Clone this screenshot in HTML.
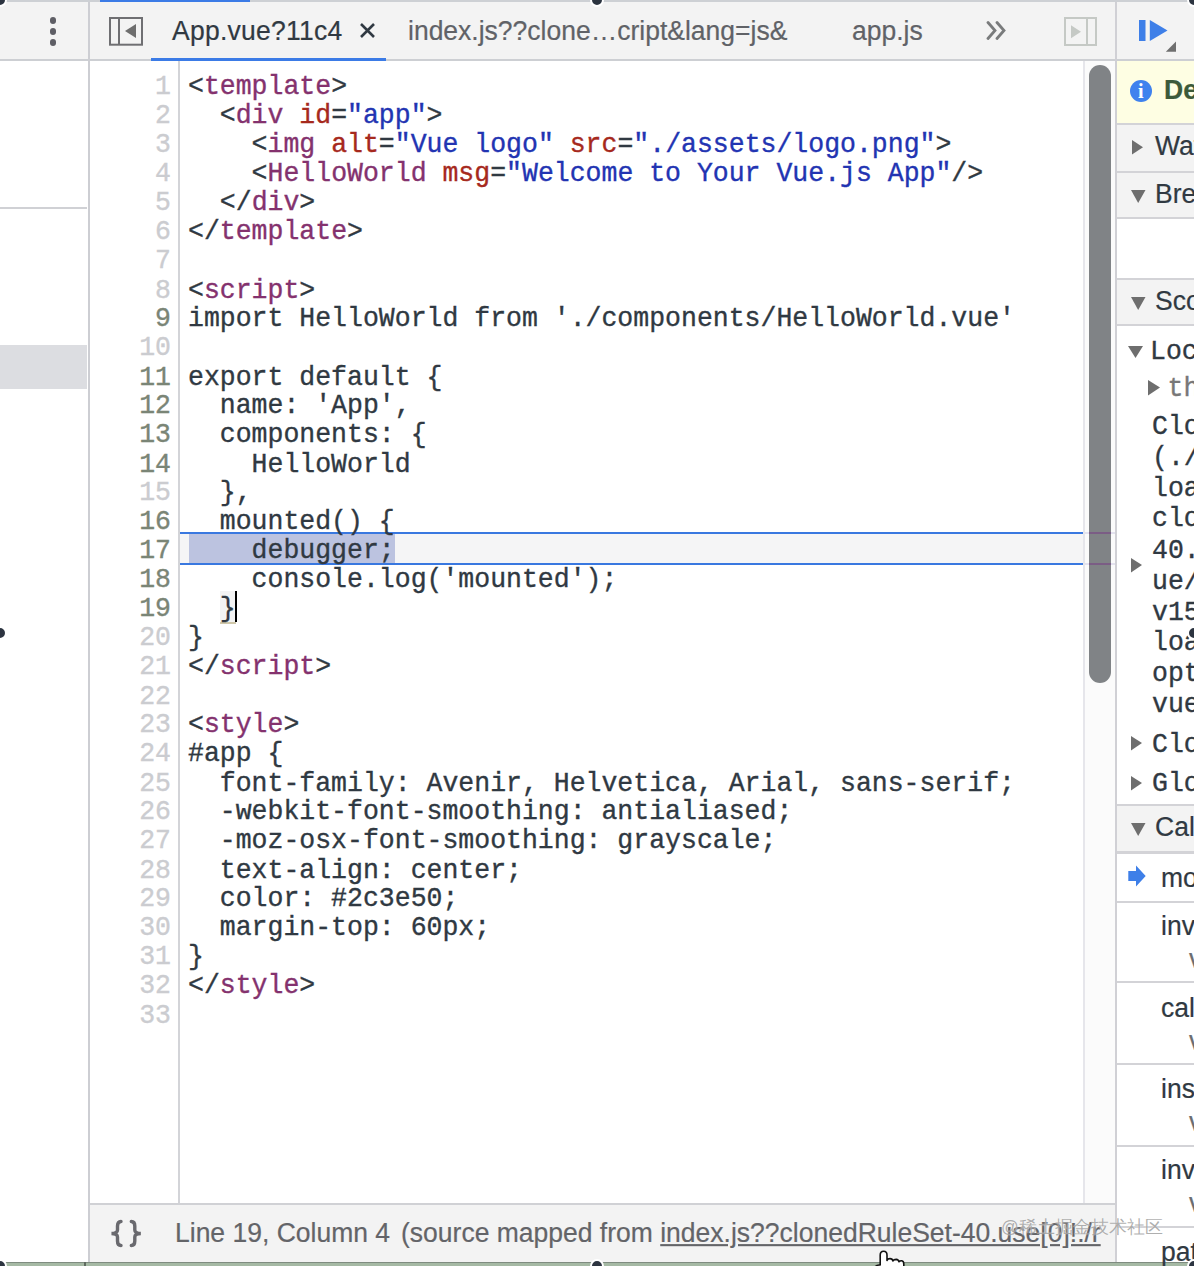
<!DOCTYPE html>
<html><head><meta charset="utf-8">
<style>
*{margin:0;padding:0;box-sizing:border-box}
html,body{width:1194px;height:1266px;overflow:hidden;background:#fff;position:relative;font-family:"Liberation Sans",sans-serif}
.a{position:absolute}
.sans{font-family:"Liberation Sans",sans-serif;-webkit-text-stroke:0.2px currentColor;transform:scaleY(1.05);transform-origin:0 26px}
.mono{font-family:"Liberation Mono",monospace;-webkit-text-stroke:0.35px currentColor;transform:scaleY(1.06);transform-origin:0 21.5px}
/* code */
#code{position:absolute;left:188px;top:72.5px;transform:scaleY(1.06);transform-origin:0 0;-webkit-text-stroke:0.35px currentColor;font-family:"Liberation Mono",monospace;font-size:26.5px;line-height:27.358px;color:#303942;white-space:pre}
#gut{position:absolute;left:90px;width:81px;top:72.5px;transform:scaleY(1.06);transform-origin:0 0;-webkit-text-stroke:0.35px currentColor;font-family:"Liberation Mono",monospace;font-size:26.5px;line-height:27.358px;color:#cbccd0;text-align:right;white-space:pre}
#gut .d{color:#7a8576}
.t{color:#84326e}
.n{color:#a6291d}
.v{color:#2234b2}
</style></head>
<body>
<!-- top strip -->
<div class="a" style="left:0;top:0;width:1194px;height:2px;background:#cdd0d4"></div>
<div class="a" style="left:100px;top:0;width:150px;height:1.5px;background:#3b7be6"></div>

<!-- left panel -->
<div class="a" style="left:0;top:2px;width:88px;height:57px;background:#f3f3f3"></div>
<div class="a" style="left:0;top:59px;width:88px;height:2px;background:#cdcfd3"></div>
<div class="a" style="left:49.8px;top:17.1px;width:6.5px;height:6.5px;border-radius:50%;background:#5e5e65"></div>
<div class="a" style="left:49.8px;top:28.1px;width:6.5px;height:6.5px;border-radius:50%;background:#5e5e65"></div>
<div class="a" style="left:49.8px;top:39.2px;width:6.5px;height:6.5px;border-radius:50%;background:#5e5e65"></div>
<div class="a" style="left:0;top:207px;width:87px;height:2px;background:#d0d1d5"></div>
<div class="a" style="left:0;top:345px;width:87px;height:44px;background:#dcdde1"></div>
<div class="a" style="left:88px;top:2px;width:2px;height:1260px;background:#cdced3"></div>

<!-- tab bar -->
<div class="a" style="left:90px;top:2px;width:1025px;height:57px;background:#f3f3f3"></div>
<div class="a" style="left:90px;top:59px;width:1025px;height:2px;background:#cdcfd3"></div>
<div class="a" style="left:151px;top:58px;width:235px;height:3px;background:#3b7be6"></div>
<!-- sidebar toggle left -->
<svg class="a" style="left:108px;top:16px" width="36" height="31" viewBox="0 0 36 31">
 <rect x="2" y="2" width="32" height="26.7" fill="none" stroke="#6f6f72" stroke-width="2"/>
 <line x1="11" y1="2" x2="11" y2="28.7" stroke="#6f6f72" stroke-width="2"/>
 <path d="M17 15 L28 8 L28 22 Z" fill="#6e6e6e"/>
</svg>
<div class="a sans" style="left:172px;top:13.6px;font-size:26.5px;line-height:34px;color:#303942;white-space:pre;letter-spacing:0.25px">App.vue?11c4</div>
<svg class="a" style="left:358px;top:22px" width="19" height="17" viewBox="0 0 19 17">
 <path d="M3 2 L16 15 M16 2 L3 15" stroke="#303942" stroke-width="2.6"/>
</svg>
<div class="a sans" style="left:408px;top:13.6px;font-size:26.5px;line-height:34px;color:#606267;white-space:pre">index.js??clone…cript&amp;lang=js&amp;</div>
<div class="a sans" style="left:852px;top:13.6px;font-size:26.5px;line-height:34px;color:#606267;white-space:pre">app.js</div>
<svg class="a" style="left:985px;top:20px" width="24" height="20" viewBox="0 0 24 20">
 <path d="M3 2.5 L10 10.5 L3 18.5 M12 2.5 L19 10.5 L12 18.5" fill="none" stroke="#797b7c" stroke-width="2.8" stroke-linecap="round"/>
</svg>
<svg class="a" style="left:1063px;top:16px" width="37" height="32" viewBox="0 0 37 32">
 <rect x="2" y="2" width="31" height="27" fill="none" stroke="#c5c9c5" stroke-width="2"/>
 <line x1="24" y1="2" x2="24" y2="29" stroke="#c5c9c5" stroke-width="2"/>
 <path d="M8 9.2 L18 15.75 L8 22.3 Z" fill="#c5c9c5"/>
</svg>

<!-- editor -->
<div class="a" style="left:178px;top:61px;width:2px;height:1142px;background:#d3d4d8"></div>
<!-- line 17 highlight -->
<div class="a" style="left:180px;top:534px;width:903px;height:29px;background:#f5f5f6"></div>
<div class="a" style="left:189px;top:534px;width:206px;height:29px;background:#bcc3e0"></div>
<div class="a" style="left:180px;top:532px;width:903px;height:2px;background:#3978e0"></div>
<div class="a" style="left:180px;top:563px;width:903px;height:2px;background:#3978e0"></div>
<!-- line 19 bracket -->
<div class="a" style="left:220px;top:591px;width:15px;height:31px;background:#f3f3f3"></div>
<div class="a" style="left:220px;top:622px;width:16px;height:2px;background:#d0c8aa"></div>
<div class="a" style="left:235px;top:591px;width:2px;height:31px;background:#000"></div>

<div id="gut">1
2
3
4
5
6
7
8
<span class="d">9</span>
10
<span class="d">11</span>
<span class="d">12</span>
<span class="d">13</span>
<span class="d">14</span>
15
<span class="d">16</span>
<span class="d">17</span>
<span class="d">18</span>
<span class="d">19</span>
20
21
22
23
24
25
26
27
28
29
30
31
32
33</div>

<div id="code">&lt;<span class="t">template</span>&gt;
  &lt;<span class="t">div</span> <span class="n">id</span>=<span class="v">"app"</span>&gt;
    &lt;<span class="t">img</span> <span class="n">alt</span>=<span class="v">"Vue logo"</span> <span class="n">src</span>=<span class="v">"./assets/logo.png"</span>&gt;
    &lt;<span class="t">HelloWorld</span> <span class="n">msg</span>=<span class="v">"Welcome to Your Vue.js App"</span>/&gt;
  &lt;/<span class="t">div</span>&gt;
&lt;/<span class="t">template</span>&gt;

&lt;<span class="t">script</span>&gt;
import HelloWorld from './components/HelloWorld.vue'

export default {
  name: 'App',
  components: {
    HelloWorld
  },
  mounted() {
    debugger;
    console.log('mounted');
  }
}
&lt;/<span class="t">script</span>&gt;

&lt;<span class="t">style</span>&gt;
#app {
  font-family: Avenir, Helvetica, Arial, sans-serif;
  -webkit-font-smoothing: antialiased;
  -moz-osx-font-smoothing: grayscale;
  text-align: center;
  color: #2c3e50;
  margin-top: 60px;
}
&lt;/<span class="t">style</span>&gt;
</div>

<!-- scrollbar -->
<div class="a" style="left:1083px;top:61px;width:2px;height:1142px;background:#e6e6eb"></div>
<div class="a" style="left:1085px;top:61px;width:30px;height:1142px;background:#fbfbfb"></div>
<div class="a" style="left:1089px;top:65px;width:22px;height:618px;border-radius:11px;background:#808386"></div>

<div class="a" style="left:1085px;top:532px;width:30px;height:2px;background:#e3e2ee"></div>
<div class="a" style="left:1085px;top:563px;width:30px;height:2px;background:#e3e2ee"></div>
<div class="a" style="left:1089px;top:532px;width:22px;height:2px;background:#7b5d85"></div>
<div class="a" style="left:1089px;top:563px;width:22px;height:2px;background:#7b5d85"></div>
<!-- right panel -->
<div class="a" style="left:1115px;top:2px;width:2px;height:1260px;background:#d0d0d5"></div>
<div class="a" style="left:1117px;top:2px;width:77px;height:57px;background:#f3f3f3"></div>
<div class="a" style="left:1117px;top:59px;width:77px;height:2px;background:#cdcfd3"></div>

<!-- status bar -->
<div class="a" style="left:90px;top:1203px;width:1025px;height:2px;background:#d0d1d5"></div>
<div class="a" style="left:90px;top:1205px;width:1025px;height:57px;background:#f3f3f3"></div>
<div class="a" style="left:0;top:1262px;width:1194px;height:4px;background:#a5b9a4"></div><div class="a" style="left:0;top:1262px;width:1194px;height:1px;background:#7f8c80"></div>

<!-- right panel content -->
<svg class="a" style="left:1136px;top:18px" width="44" height="36" viewBox="0 0 44 36">
 <rect x="3" y="2" width="6.5" height="21" fill="#3e7fe8"/>
 <path d="M13.8 2 L31.5 12.5 L13.8 23 Z" fill="#3e7fe8"/>
 <path d="M29.8 33.8 L40 33.8 L40 23.6 Z" fill="#6f6f6f"/>
</svg>
<div class="a" style="left:1117px;top:61px;width:77px;height:62px;background:#fefee3"></div>
<div class="a" style="left:1117px;top:122.5px;width:77px;height:2px;background:#d3d3d7"></div>
<div class="a" style="left:1130px;top:79.9px;width:22px;height:22px;border-radius:50%;background:#3f82ee"></div>
<div class="a" style="left:1130px;top:78px;width:21.5px;text-align:center;font-family:'Liberation Serif',serif;font-weight:bold;font-size:20px;line-height:26px;color:#fff">i</div>
<div class="a sans" style="left:1164px;top:73px;font-size:26.5px;line-height:34px;font-weight:bold;color:#3c5a3a;white-space:pre">Debugger paused</div>

<div class="a" style="left:1117px;top:124.5px;width:77px;height:46.5px;background:#f3f3f3"></div>
<div class="a" style="left:1117px;top:171px;width:77px;height:2px;background:#d3d3d7"></div>
<svg class="a" style="left:1131px;top:139px" width="14" height="17"><path d="M1 1 L12 8.3 L1 15.5 Z" fill="#6e6e6e"/></svg>
<div class="a sans" style="left:1155px;top:129px;font-size:26.5px;line-height:34px;color:#303942;white-space:pre">Watch</div>

<div class="a" style="left:1117px;top:173px;width:77px;height:44px;background:#f3f3f3"></div>
<div class="a" style="left:1117px;top:217px;width:77px;height:2px;background:#d3d3d7"></div>
<svg class="a" style="left:1130px;top:189px" width="17" height="16"><path d="M1 1 L15.5 1 L8.2 14 Z" fill="#6e6e6e"/></svg>
<div class="a sans" style="left:1155px;top:177px;font-size:26.5px;line-height:34px;color:#303942;white-space:pre">Breakpoints</div>

<div class="a" style="left:1117px;top:278.3px;width:77px;height:2px;background:#d3d3d7"></div>
<div class="a" style="left:1117px;top:280.3px;width:77px;height:43.5px;background:#f3f3f3"></div>
<div class="a" style="left:1117px;top:323.8px;width:77px;height:2px;background:#d3d3d7"></div>
<svg class="a" style="left:1130px;top:296px" width="17" height="16"><path d="M1 1 L15.5 1 L8.2 14 Z" fill="#6e6e6e"/></svg>
<div class="a sans" style="left:1155px;top:284px;font-size:26.5px;line-height:34px;color:#303942;white-space:pre">Scope</div>

<svg class="a" style="left:1127px;top:345px" width="17" height="15"><path d="M1 1 L16 1 L8.5 13 Z" fill="#6e6e6e"/></svg>
<svg class="a" style="left:1147px;top:379px" width="14" height="18"><path d="M1 1 L13 8.5 L1 16.5 Z" fill="#6e6e6e"/></svg>
<svg class="a" style="left:1130px;top:557px" width="13" height="17"><path d="M1 1 L12 8 L1 15.5 Z" fill="#6e6e6e"/></svg>
<svg class="a" style="left:1130px;top:735px" width="13" height="17"><path d="M1 1 L12 8 L1 15.5 Z" fill="#6e6e6e"/></svg>
<svg class="a" style="left:1130px;top:775px" width="13" height="17"><path d="M1 1 L12 8 L1 15.5 Z" fill="#6e6e6e"/></svg>
<div class="a mono" style="left:1150px;top:338px;font-size:26.5px;line-height:29px;color:#303942;white-space:pre">Local</div>
<div class="a mono" style="left:1167.5px;top:375px;font-size:26.5px;line-height:29px;color:#787878;white-space:pre">this</div>
<div class="a mono" style="left:1152px;top:411.6px;transform-origin:0 0;font-size:26.5px;line-height:29.15px;color:#303942;white-space:pre">Clos
(./n
load
clon
40.u
ue/l
v15/
load
opti
vue?</div>
<div class="a mono" style="left:1152px;top:731px;font-size:26.5px;line-height:29px;color:#303942;white-space:pre">Closure</div>
<div class="a mono" style="left:1152px;top:770px;font-size:26.5px;line-height:29px;color:#303942;white-space:pre">Global</div>

<div class="a" style="left:1117px;top:803.5px;width:77px;height:2px;background:#d3d3d7"></div>
<div class="a" style="left:1117px;top:805.5px;width:77px;height:45px;background:#f3f3f3"></div>
<div class="a" style="left:1117px;top:850.5px;width:77px;height:3px;background:#d3d3d7"></div>
<svg class="a" style="left:1130px;top:822px" width="17" height="16"><path d="M1 1 L15.5 1 L8.2 14 Z" fill="#6e6e6e"/></svg>
<div class="a sans" style="left:1155px;top:810px;font-size:26.5px;line-height:34px;color:#303942;white-space:pre">Call Stack</div>

<svg class="a" style="left:1127px;top:865px" width="20" height="23" viewBox="0 0 20 23"><path d="M1.3 6 L9 6 L9 0.6 L18.7 11 L9 21.5 L9 16 L1.3 16 Z" fill="#3e7fe8"/></svg>
<div class="a sans" style="left:1161px;top:861px;font-size:26.5px;line-height:34px;color:#303942;white-space:pre">mounted</div>
<div class="a" style="left:1117px;top:900.7px;width:77px;height:2px;background:#d3d3d7"></div>
<div class="a sans" style="left:1161px;top:909px;font-size:26.5px;line-height:34px;color:#303942;white-space:pre">invokeWithErrorHandling</div>
<div class="a sans" style="left:1189px;top:942px;font-size:26.5px;line-height:34px;color:#6b6d70;white-space:pre">vue</div>
<div class="a" style="left:1117px;top:981.2px;width:77px;height:2px;background:#d3d3d7"></div>
<div class="a sans" style="left:1161px;top:990.5px;font-size:26.5px;line-height:34px;color:#303942;white-space:pre">callHook</div>
<div class="a sans" style="left:1189px;top:1024px;font-size:26.5px;line-height:34px;color:#6b6d70;white-space:pre">vue</div>
<div class="a" style="left:1117px;top:1062.8px;width:77px;height:2px;background:#d3d3d7"></div>
<div class="a sans" style="left:1161px;top:1071.7px;font-size:26.5px;line-height:34px;color:#303942;white-space:pre">insert</div>
<div class="a sans" style="left:1189px;top:1105px;font-size:26.5px;line-height:34px;color:#6b6d70;white-space:pre">vue</div>
<div class="a" style="left:1117px;top:1145px;width:77px;height:2px;background:#d3d3d7"></div>
<div class="a sans" style="left:1161px;top:1153px;font-size:26.5px;line-height:34px;color:#303942;white-space:pre">invokeInsertHook</div>
<div class="a sans" style="left:1189px;top:1186px;font-size:26.5px;line-height:34px;color:#6b6d70;white-space:pre">vue</div>
<div class="a" style="left:1117px;top:1225.7px;width:77px;height:2px;background:#d3d3d7"></div>
<div class="a sans" style="left:1161px;top:1235px;font-size:26.5px;line-height:34px;color:#303942;white-space:pre">patch</div>

<!-- status content -->
<svg class="a" style="left:106px;top:1216px" width="42" height="34" viewBox="0 0 42 34">
 <path d="M15 5.5 Q11.5 5.5 11.5 10 L11.5 14 Q11.5 17.3 5.5 17.5 Q11.5 17.7 11.5 21 L11.5 25 Q11.5 29.5 15 29.5" fill="none" stroke="#69696e" stroke-width="3.4" stroke-linecap="round"/>
 <path d="M25.3 5.5 Q28.8 5.5 28.8 10 L28.8 14 Q28.8 17.3 34.8 17.5 Q28.8 17.7 28.8 21 L28.8 25 Q28.8 29.5 25.3 29.5" fill="none" stroke="#69696e" stroke-width="3.4" stroke-linecap="round"/>
</svg>
<div class="a sans" style="left:175px;top:1216px;font-size:26.5px;line-height:34px;color:#636468;white-space:pre">Line 19, Column 4</div>
<div class="a sans" style="left:401px;top:1216px;font-size:26.5px;line-height:34px;color:#636468;white-space:pre">(source mapped from <span style="text-decoration:underline">index.js??clonedRuleSet-40.use[0]!./r</span></div>
<div class="a" style="left:1001px;top:1212.5px;font-size:17.5px;line-height:28px;color:rgba(95,95,95,0.5);text-shadow:0 0 1px rgba(255,255,255,0.9);white-space:pre">@稀土掘金技术社区</div>

<div class="a" style="left:84px;top:1262px;width:2px;height:4px;background:#5f6b60"></div>
<!-- hand cursor -->
<svg class="a" style="left:872px;top:1249px" width="36" height="18" viewBox="0 0 36 18">
 <path d="M8.2 16 L8.2 6 Q8.2 2.2 11.6 2.2 Q15 2.2 15 6 L15 11.5 Q15.5 9.6 18 9.6 Q20.5 9.6 21 12 Q21.8 10.4 24.2 10.4 Q26.6 10.6 27 12.8 Q28 11.6 29.8 11.8 Q31.8 12.3 31.8 15 L31.8 20 L2 20 Q3.5 15.5 8.2 16 Z" fill="#fff" stroke="#111" stroke-width="1.6" stroke-linejoin="round"/>
</svg>
<!-- resize handles -->
<div class="a" style="left:-7px;top:-7px;width:14px;height:14px;border-radius:50%;background:#2c3440;border:2px solid #fff"></div>
<div class="a" style="left:590px;top:-7px;width:14px;height:14px;border-radius:50%;background:#2c3440;border:2px solid #fff"></div>
<div class="a" style="left:1187px;top:-7px;width:14px;height:14px;border-radius:50%;background:#2c3440;border:2px solid #fff"></div>
<div class="a" style="left:-7px;top:626px;width:14px;height:14px;border-radius:50%;background:#2c3440;border:2px solid #fff"></div>
<div class="a" style="left:1187px;top:626px;width:14px;height:14px;border-radius:50%;background:#2c3440;border:2px solid #fff"></div>
<div class="a" style="left:-7px;top:1259px;width:14px;height:14px;border-radius:50%;background:#2c3440;border:2px solid #fff"></div>
<div class="a" style="left:590px;top:1259px;width:14px;height:14px;border-radius:50%;background:#2c3440;border:2px solid #fff"></div>
<div class="a" style="left:1187px;top:1259px;width:14px;height:14px;border-radius:50%;background:#2c3440;border:2px solid #fff"></div>
</body></html>
